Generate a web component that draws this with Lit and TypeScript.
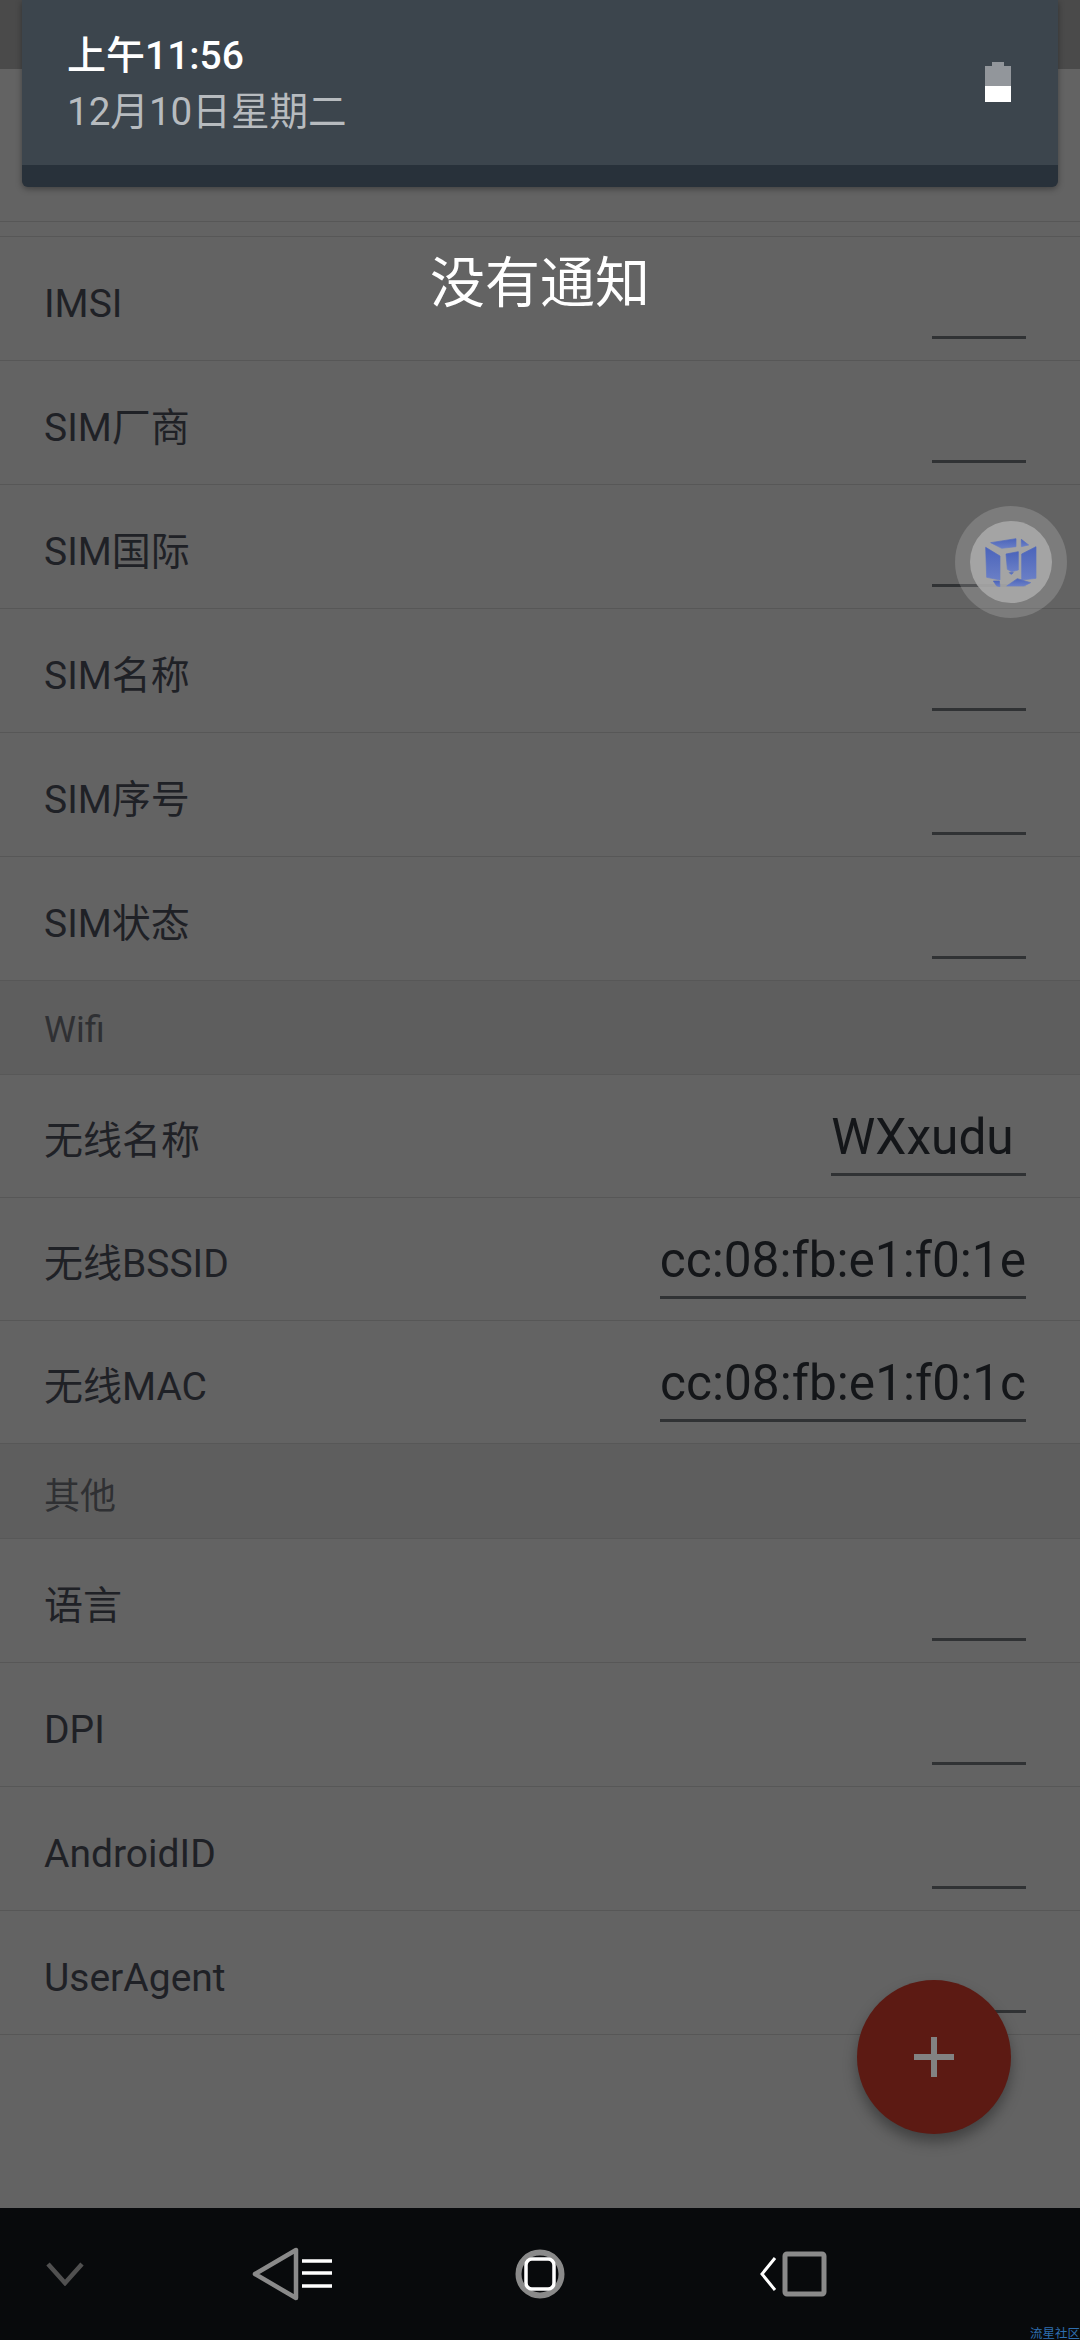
import { LitElement, html, css, svg } from 'lit';
import { customElement } from 'lit/decorators.js';
import { classMap } from 'lit/directives/class-map.js';

type Item = { section?: boolean; compact?: boolean; wide?: boolean; label: string; value?: string };

const ITEMS: Item[] = [
  { label: 'IMSI' },
  { label: 'SIM厂商' },
  { label: 'SIM国际' },
  { label: 'SIM名称' },
  { label: 'SIM序号' },
  { label: 'SIM状态' },
  { section: true, label: 'Wifi' },
  { compact: true, label: '无线名称', value: 'WXxudu ' },
  { compact: true, label: '无线BSSID', value: 'cc:08:fb:e1:f0:1e' },
  { compact: true, label: '无线MAC', value: 'cc:08:fb:e1:f0:1c' },
  { section: true, wide: true, label: '其他' },
  { label: '语言' },
  { label: 'DPI' },
  { label: 'AndroidID' },
  { label: 'UserAgent' },
];

@customElement('app-root')
export class AppRoot extends LitElement {
  static override styles = css`
    :host {
      display: block;
      position: relative;
      width: 1080px;
      height: 2340px;
      overflow: hidden;
      background: #636363;
      font-family: Roboto, 'Noto Sans CJK SC', sans-serif;
      color: #1f2126;
    }

    .strip {
      height: 69px;
      background: #4a4a4a;
    }

    .header {
      height: 152px;
      border-bottom: 1px solid #575757;
    }

    .gap {
      height: 14px;
      border-bottom: 1px solid #575757;
    }

    .row {
      display: flex;
      justify-content: space-between;
      height: 123px;
      padding: 0 54px 0 44px;
      border-bottom: 1px solid #575757;
    }

    .row.compact {
      height: 122px;
    }

    .label {
      align-self: center;
      margin-top: 10px;
      font-size: 39px;
      line-height: 48px;
      white-space: pre;
    }

    .field {
      align-self: flex-end;
      min-width: 94px;
      height: 56px;
      margin-bottom: 21px;
      padding-bottom: 8px;
      border-bottom: 3px solid #303234;
      font-size: 49.6px;
      line-height: 56px;
      white-space: pre;
      color: #141619;
    }

    .section {
      display: flex;
      align-items: center;
      height: 89px;
      padding: 4px 0 0 44px;
      background: #5e5e5e;
      border-bottom: 1px solid #585858;
      font-size: 36px;
      color: #2f3033;
    }

    .section.wide {
      height: 90px;
    }

    .panel {
      position: absolute;
      top: 0;
      left: 22px;
      width: 1036px;
      height: 187px;
      display: flex;
      flex-direction: column;
      border-radius: 0 0 6px 6px;
      overflow: hidden;
      background: #28313a;
      box-shadow: 0 2px 6px rgba(0, 0, 0, 0.35);
    }

    .panel-main {
      height: 165px;
      display: flex;
      align-items: flex-start;
      justify-content: space-between;
      padding: 0 47px 0 45px;
      background: #3c454d;
    }

    .clock {
      display: flex;
      flex-direction: column;
      padding-top: 31px;
    }

    .time {
      font-size: 39px;
      line-height: 50px;
      font-weight: 500;
      color: #ffffff;
    }

    .date {
      margin-top: 6px;
      font-size: 38.6px;
      line-height: 50px;
      color: #b7bbbf;
    }

    .battery {
      margin-top: 62px;
    }

    .empty {
      position: absolute;
      top: 245px;
      left: 0;
      width: 100%;
      text-align: center;
      font-size: 55px;
      line-height: 76px;
      color: #ffffff;
    }

    .float {
      position: absolute;
      top: 506px;
      left: 955px;
      width: 112px;
      height: 112px;
      display: flex;
      align-items: center;
      justify-content: center;
      border-radius: 50%;
      background: rgba(255, 255, 255, 0.16);
    }

    .float-inner {
      width: 82px;
      height: 82px;
      border-radius: 50%;
      background: rgba(170, 170, 170, 0.88);
    }

    .float svg {
      position: absolute;
      top: -26px;
      left: -55px;
    }

    .fab {
      position: absolute;
      top: 1980px;
      left: 857px;
      width: 154px;
      height: 154px;
      display: flex;
      align-items: center;
      justify-content: center;
      border-radius: 50%;
      background: #5c1a13;
      box-shadow: 0 8px 14px rgba(0, 0, 0, 0.35);
    }

    .nav {
      position: absolute;
      left: 0;
      right: 0;
      bottom: 0;
      height: 132px;
      display: grid;
      grid-template-columns: 130px 324px 172px 334px;
      justify-items: center;
      align-items: center;
      background: #080a0c;
    }

    .mark {
      position: absolute;
      right: 0;
      bottom: 0;
      font-size: 12.5px;
      line-height: 13px;
      color: #2f6fb0;
    }
  `;

  private renderItem(item: Item) {
    if (item.section) {
      return html`<div class=${classMap({ section: true, wide: !!item.wide })}>${item.label}</div>`;
    }
    return html`
      <div class=${classMap({ row: true, compact: !!item.compact })}>
        <span class="label">${item.label}</span>
        <span class="field">${item.value ?? ''}</span>
      </div>
    `;
  }

  private cube() {
    return html`<svg width="180" height="160" viewBox="0 0 540 480">
      <defs>
        <linearGradient id="cube" x1="0" y1="0" x2="0" y2="1">
          <stop offset="0" stop-color="#4b64bb"></stop>
          <stop offset="1" stop-color="#6a7fc6"></stop>
        </linearGradient>
      </defs>
      <g fill="url(#cube)" stroke="url(#cube)" stroke-width="2" stroke-linejoin="round">
        <polygon points="257,202 300,228 300,300 260,292"></polygon>
        <polygon points="408,200 408,295 365,300 365,222"></polygon>
        <polygon points="272,188 348,176 348,200 305,205"></polygon>
        <polygon points="364,178 386,195 364,200"></polygon>
        <polygon points="318,222 355,215 355,270 335,275 322,268"></polygon>
        <polygon points="328,278 340,278 334,284"></polygon>
        <polygon points="320,318 352,296 392,308 372,318"></polygon>
        <polygon points="280,303 298,303 300,320 290,318"></polygon>
      </g>
    </svg>`;
  }

  private nav() {
    return html`
      <svg width="38" height="24" viewBox="0 0 38 24">
        ${svg`<path d="M2 2 L19 21 L36 2" fill="none" stroke="#505050" stroke-width="4.5"></path>`}
      </svg>
      <svg width="80" height="54" viewBox="0 0 80 54">
        ${svg`<path d="M44 3 L44 51 L3 27 Z" fill="none" stroke="#8a8a8a" stroke-width="4.5" stroke-linejoin="round"></path>
          <path d="M50 14 H80 M50 26 H80 M50 39 H80" stroke="#ffffff" stroke-width="3.5"></path>`}
      </svg>
      <svg width="50" height="52" viewBox="0 0 50 52">
        ${svg`<circle cx="25" cy="26" r="21.5" fill="none" stroke="#8a8a8a" stroke-width="6"></circle>
          <rect x="11" y="11" width="28" height="30" rx="6" fill="none" stroke="#ffffff" stroke-width="3.5"></rect>`}
      </svg>
      <svg width="68" height="46" viewBox="0 0 68 46">
        ${svg`<path d="M16 7 L3 23 L16 39" fill="none" stroke="#ffffff" stroke-width="3"></path>
          <rect x="26" y="3" width="39" height="40" rx="2" fill="none" stroke="#8a8a8a" stroke-width="5"></rect>`}
      </svg>
    `;
  }

  override render() {
    return html`
      <div class="strip"></div>
      <div class="header"></div>
      <div class="gap"></div>
      ${ITEMS.map((item) => this.renderItem(item))}

      <div class="panel">
        <div class="panel-main">
          <div class="clock">
            <span class="time">上午11:56</span>
            <span class="date">12月10日星期二</span>
          </div>
          <svg class="battery" width="26" height="40" viewBox="0 0 26 40">
            ${svg`<path d="M7 0 H19 V4 H26 V24 H0 V4 H7 Z" fill="#92969b"></path>
              <rect x="0" y="24" width="26" height="16" fill="#ffffff"></rect>`}
          </svg>
        </div>
      </div>
      <div class="empty">没有通知</div>

      <div class="float">
        <div class="float-inner"></div>
        ${this.cube()}
      </div>

      <div class="fab">
        <svg width="40" height="40" viewBox="0 0 40 40">
          ${svg`<path d="M20 0 V40 M0 20 H40" stroke="#828282" stroke-width="6"></path>`}
        </svg>
      </div>

      <div class="nav">
        ${this.nav()}
        <span class="mark">流星社区</span>
      </div>
    `;
  }
}
